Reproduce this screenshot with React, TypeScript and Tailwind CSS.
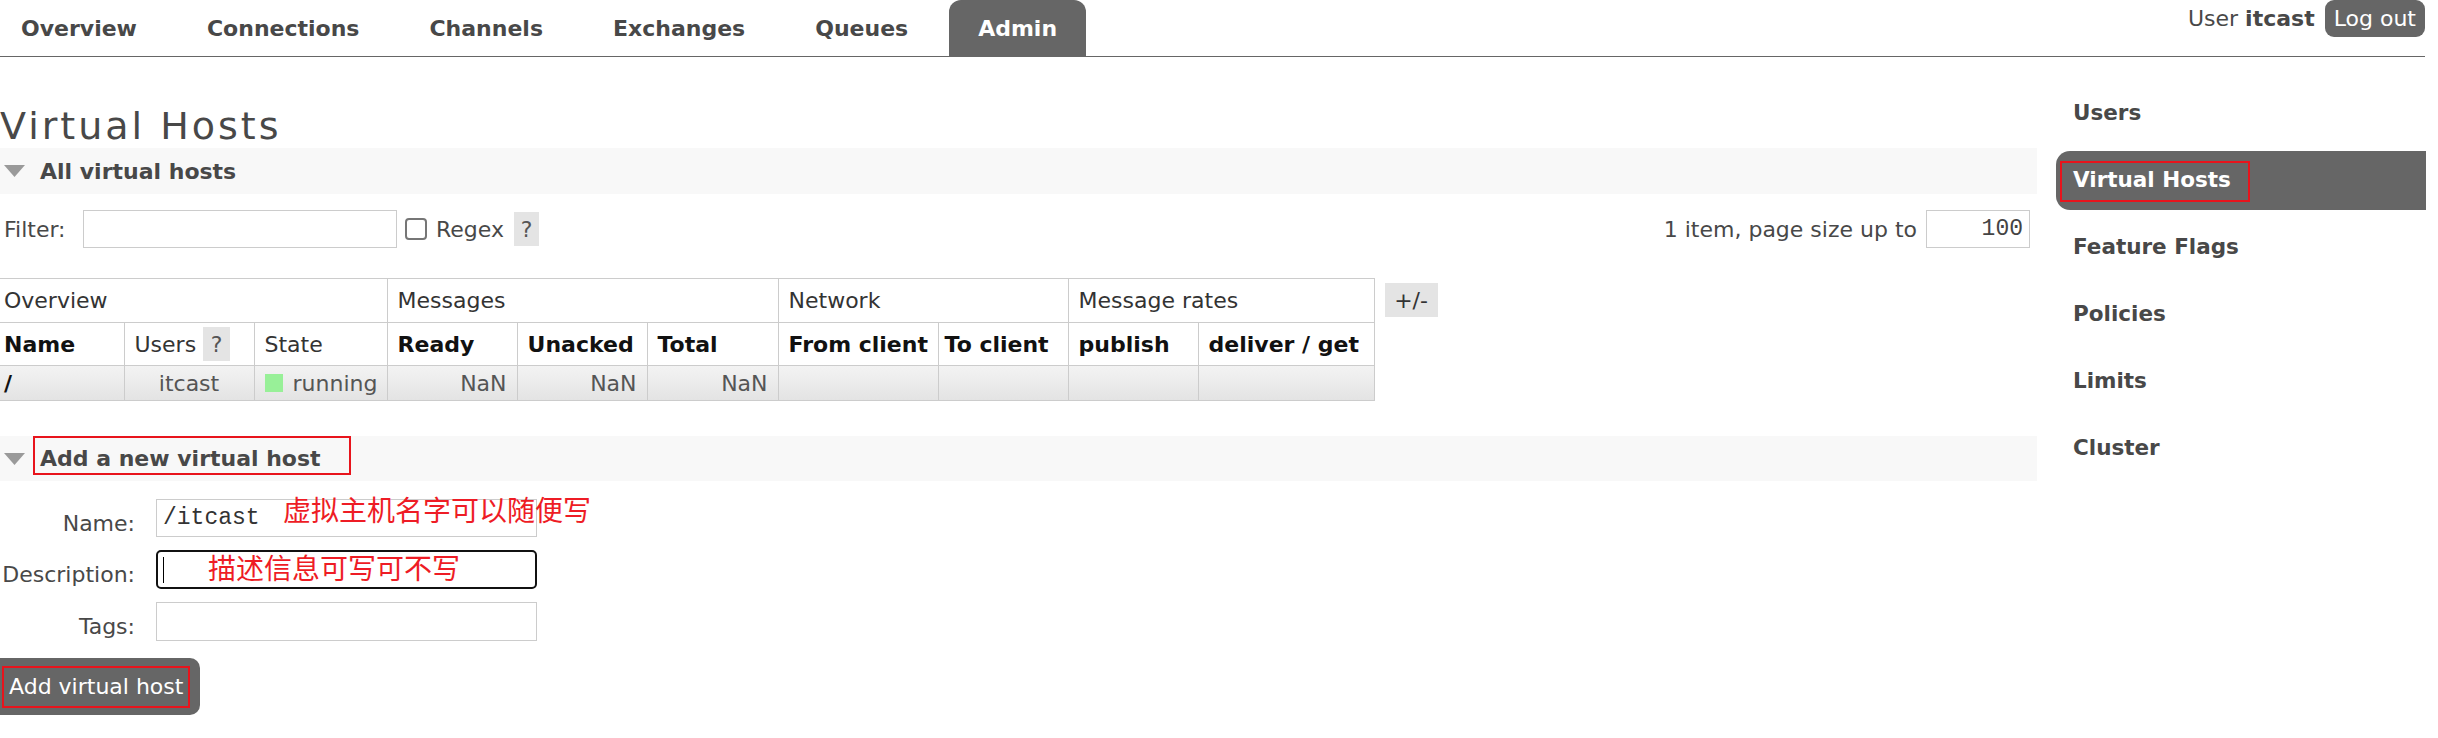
const TABS = ['Overview', 'Connections', 'Channels', 'Exchanges', 'Queues', 'Admin'];
const SIDE = ['Users', 'Virtual Hosts', 'Feature Flags', 'Policies', 'Limits', 'Cluster'];

function Arrow() {
  return (
    <svg width="21" height="12" viewBox="0 0 21 12" className="shrink-0">
      <polygon points="0,0 21,0 10.5,12" fill="#9a9a9a" />
    </svg>
  );
}

function Help({ w = 'w-[25px]' }: { w?: string }) {
  return (
    <span className={`${w} h-[34px] bg-[#e4e4e4] text-[#555] flex items-center justify-center`}>?</span>
  );
}

export default function App() {
  const cell = 'border border-[#cccccc]';
  return (
    <div className="relative w-[2438px] h-[738px] overflow-hidden bg-white text-[#484848] text-[22px] font-['DejaVu_Sans',Verdana,sans-serif]">
      {/* top menu */}
      <header className="flex h-[57px] mr-[13px] border-b-[1.5px] border-[#666]">
        <nav className="flex gap-[12px] -ml-[8px] font-bold">
          {TABS.map((t) => (
            <a
              key={t}
              className={`px-[29px] flex items-center ${t === 'Admin' ? 'bg-[#666] text-white rounded-t-[12px]' : 'text-[#484848]'}`}
            >
              {t}
            </a>
          ))}
        </nav>
        <div className="ml-auto flex items-start">
          <span className="h-[37px] flex items-center mr-[10px]">
            User&nbsp;<b>itcast</b>
          </span>
          <button className="h-[37px] px-[9px] bg-[#666] text-white rounded-[9px]">Log out</button>
        </div>
      </header>

      <div className="flex">
        <main className="w-[2037px] shrink-0">
          <h1 className="mt-[47px] text-[38px] leading-[44px] tracking-[3px] font-normal text-[#484848]">
            Virtual Hosts
          </h1>

          <div className="h-[46px] bg-[#f8f8f8] flex items-center pl-[4px] gap-[15px] font-bold">
            <Arrow />
            <span>All virtual hosts</span>
          </div>

          <div className="mt-[16px] flex items-center">
            <label className="w-[83px] pl-[4px]">Filter:</label>
            <input className="w-[314px] h-[38px] border border-[#ccc] outline-none" />
            <span className="ml-[8px] w-[22px] h-[22px] border-2 border-[#767676] rounded-[4px] bg-white" />
            <span className="ml-[9px] mr-[10px]">Regex</span>
            <Help />
            <div className="ml-auto flex items-center mr-[7px]">
              <span>1 item, page size up to</span>
              <input
                readOnly
                value="100"
                className="ml-[9px] w-[104px] h-[38px] border border-[#ccc] text-right pr-[6px] text-[23px] text-[#444] font-['Liberation_Mono',monospace] outline-none"
              />
            </div>
          </div>

          <div className="mt-[30px] flex items-start">
            <table className="border-collapse table-fixed w-[1374px]">
              <colgroup>
                {[124, 130, 133, 130, 130, 131, 160, 130, 130, 176].map((w, i) => (
                  <col key={i} style={{ width: w }} />
                ))}
              </colgroup>
              <thead>
                <tr className="h-[44px] text-[#333]">
                  <th colSpan={3} className={`${cell} border-l-0 font-normal text-left pl-[4px]`}>Overview</th>
                  <th colSpan={3} className={`${cell} font-normal text-left pl-[10px]`}>Messages</th>
                  <th colSpan={2} className={`${cell} font-normal text-left pl-[10px]`}>Network</th>
                  <th colSpan={2} className={`${cell} font-normal text-left pl-[10px]`}>Message rates</th>
                </tr>
                <tr className="h-[43px] text-[#111]">
                  <th className={`${cell} border-l-0 text-left pl-[4px]`}>Name</th>
                  <th className={`${cell} font-normal text-left pl-[10px] text-[#333]`}>
                    <span className="flex items-center gap-[7px]">
                      Users <Help w="w-[27px]" />
                    </span>
                  </th>
                  <th className={`${cell} font-normal text-left pl-[10px] text-[#333]`}>State</th>
                  <th className={`${cell} text-left pl-[10px]`}>Ready</th>
                  <th className={`${cell} text-left pl-[10px]`}>Unacked</th>
                  <th className={`${cell} text-left pl-[10px]`}>Total</th>
                  <th className={`${cell} text-left pl-[10px] whitespace-nowrap`}>From client</th>
                  <th className={`${cell} text-left pl-[6px] whitespace-nowrap`}>To client</th>
                  <th className={`${cell} text-left pl-[10px]`}>publish</th>
                  <th className={`${cell} text-left pl-[10px] whitespace-nowrap`}>deliver / get</th>
                </tr>
              </thead>
              <tbody>
                <tr className="h-[35px] bg-gradient-to-b from-[#f3f3f3] to-[#e3e3e3] text-[#555]">
                  <td className={`${cell} border-l-0 pl-[4px] font-bold text-[#111]`}>/</td>
                  <td className={`${cell} text-center`}>itcast</td>
                  <td className={`${cell} pl-[10px]`}>
                    <span className="flex items-center gap-[10px]">
                      <span className="w-[18px] h-[18px] bg-[#98f098]" />
                      running
                    </span>
                  </td>
                  <td className={`${cell} text-right pr-[10px]`}>NaN</td>
                  <td className={`${cell} text-right pr-[10px]`}>NaN</td>
                  <td className={`${cell} text-right pr-[10px]`}>NaN</td>
                  <td className={cell} />
                  <td className={cell} />
                  <td className={cell} />
                  <td className={cell} />
                </tr>
              </tbody>
            </table>
            <span className="ml-[10px] mt-[5px] w-[53px] h-[34px] bg-[#e4e4e4] text-[#333] flex items-center justify-center">
              +/-
            </span>
          </div>

          <div className="relative mt-[35px] h-[45px] bg-[#f8f8f8] flex items-center pl-[4px] gap-[15px] font-bold">
            <Arrow />
            <span>Add a new virtual host</span>
            <span className="absolute left-[33px] top-0 w-[318px] h-[39px] border-2 border-[#e8141c]" />
          </div>

          <div className="mt-[18px] flex flex-col gap-[13px]">
            <div className="flex items-center h-[38px]">
              <label className="w-[135px] text-right pt-[10px]">Name:</label>
              <input
                readOnly
                value="/itcast"
                className="ml-[21px] w-[381px] h-[38px] border border-[#ccc] pl-[6px] text-[23px] text-[#333] font-['Liberation_Mono',monospace] outline-none"
              />
            </div>
            <div className="flex items-center h-[39px]">
              <label className="w-[135px] text-right pt-[10px]">Description:</label>
              <div className="ml-[21px] w-[381px] h-[39px] border-2 border-[#111] rounded-[5px] flex items-center pl-[5px]">
                <span className="w-[1px] h-[26px] bg-black" />
              </div>
            </div>
            <div className="flex items-center h-[39px]">
              <label className="w-[135px] text-right pt-[10px]">Tags:</label>
              <input className="ml-[21px] w-[381px] h-[39px] border border-[#ccc] outline-none" />
            </div>
          </div>

          <button className="relative mt-[17px] w-[200px] h-[57px] bg-[#666] text-white rounded-r-[10px] text-left pl-[9px]">
            Add virtual host
            <span className="absolute left-[2px] top-[8px] w-[188px] h-[42px] border-2 border-[#e8141c]" />
          </button>
        </main>

        <aside className="ml-[19px] w-[370px] pt-[27px] flex flex-col gap-[8px] font-bold text-[21.5px]">
          {SIDE.map((s) => (
            <a
              key={s}
              className={`relative h-[59px] flex items-center pl-[17px] ${s === 'Virtual Hosts' ? 'bg-[#666] text-white rounded-l-[14px]' : 'text-[#484848]'}`}
            >
              {s}
              {s === 'Virtual Hosts' && (
                <span className="absolute left-[4px] top-[10px] w-[190px] h-[41px] border-2 border-[#e8141c]" />
              )}
            </a>
          ))}
        </aside>
      </div>

      {/* red hand-written annotations */}
      <span className="absolute left-[283px] top-[494px] text-[28px] leading-[30px] text-[#ee1c25] font-['Noto_Sans_CJK_SC',sans-serif]">
        虚拟主机名字可以随便写
      </span>
      <span className="absolute left-[208px] top-[552px] text-[28px] leading-[30px] text-[#ee1c25] font-['Noto_Sans_CJK_SC',sans-serif]">
        描述信息可写可不写
      </span>
    </div>
  );
}
